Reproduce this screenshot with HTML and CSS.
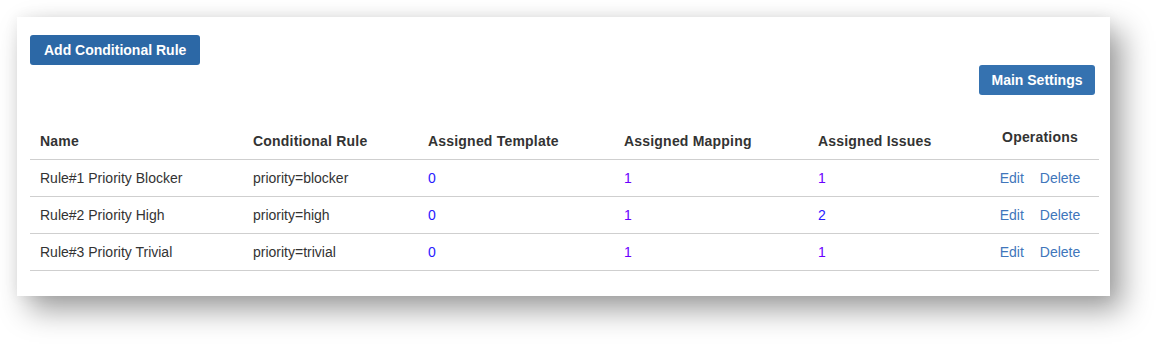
FILE: index.html
```html
<!DOCTYPE html>
<html lang="en">
<head>
    <meta charset="UTF-8">
    <title>Conditional Rules</title>
    <link rel="stylesheet" href="styles.css">
</head>
<body>
    <div class="panel">
        <div class="toolbar">
            <button class="btn btn-add">Add Conditional Rule</button>
            <div class="toolbar-right">
                <button class="btn btn-main">Main Settings</button>
            </div>
        </div>

        <table class="rules">
            <colgroup>
                <col class="col-name">
                <col class="col-rule">
                <col class="col-template">
                <col class="col-mapping">
                <col class="col-issues">
                <col class="col-ops">
            </colgroup>
            <thead>
                <tr>
                    <th>Name</th>
                    <th>Conditional Rule</th>
                    <th>Assigned Template</th>
                    <th>Assigned Mapping</th>
                    <th>Assigned Issues</th>
                    <th class="ops ops-head">Operations</th>
                </tr>
            </thead>
            <tbody>
                <tr>
                    <td>Rule#1 Priority Blocker</td>
                    <td>priority=blocker</td>
                    <td><a class="num">0</a></td>
                    <td><a class="num visited">1</a></td>
                    <td><a class="num visited">1</a></td>
                    <td class="ops"><a class="op">Edit</a><a class="op">Delete</a></td>
                </tr>
                <tr>
                    <td>Rule#2 Priority High</td>
                    <td>priority=high</td>
                    <td><a class="num">0</a></td>
                    <td><a class="num visited">1</a></td>
                    <td><a class="num">2</a></td>
                    <td class="ops"><a class="op">Edit</a><a class="op">Delete</a></td>
                </tr>
                <tr>
                    <td>Rule#3 Priority Trivial</td>
                    <td>priority=trivial</td>
                    <td><a class="num">0</a></td>
                    <td><a class="num visited">1</a></td>
                    <td><a class="num visited">1</a></td>
                    <td class="ops"><a class="op">Edit</a><a class="op">Delete</a></td>
                </tr>
            </tbody>
        </table>
    </div>
</body>
</html>
```

FILE: styles.css
```css
* {
    margin: 0;
    padding: 0;
    box-sizing: border-box;
}

html,
body {
    min-height: 345px;
}

body {
    font-family: "Liberation Sans", Arial, sans-serif;
    font-size: 14px;
    color: #333;
    background: #fff;
    padding: 17px 0 0 17px;
}

.panel {
    width: 1093px;
    height: 279px;
    background: #fff;
    padding: 18px 11px 26px 13px;
    box-shadow: 12px 14px 28px rgba(0, 0, 0, 0.38), 0 0 14px rgba(0, 0, 0, 0.06);
}

.toolbar {
    display: flex;
    flex-direction: column;
    align-items: flex-start;
}

.toolbar-right {
    align-self: stretch;
    display: flex;
    justify-content: flex-end;
    padding-right: 4px;
}

.btn {
    border: none;
    border-radius: 3px;
    height: 30px;
    font-family: inherit;
    font-size: 14px;
    font-weight: bold;
    color: #fff;
    cursor: pointer;
}

.btn-add {
    background: #2c68a6;
    padding: 0 14px;
}

.btn-main {
    background: #3572b0;
    padding: 0 12.5px;
}

.rules {
    margin-top: 24px;
    width: 1069px;
    border-collapse: collapse;
    table-layout: fixed;
}

.col-name { width: 213px; }
.col-rule { width: 175px; }
.col-template { width: 196px; }
.col-mapping { width: 194px; }
.col-issues { width: 173px; }
.col-ops { width: 118px; }

.rules th,
.rules td {
    text-align: left;
    padding: 8px 10px;
    line-height: 20px;
    border-bottom: 1px solid #cfcfcf;
    white-space: nowrap;
}

.rules th {
    font-weight: bold;
    vertical-align: bottom;
    letter-spacing: 0.2px;
}

.rules th.ops-head {
    padding-bottom: 12px;
}

.rules .ops {
    text-align: center;
}

.num {
    color: #2a1aff;
    text-decoration: none;
}

.num.visited {
    color: #6a00ff;
}

.op {
    color: #4076bb;
    text-decoration: none;
}

.op + .op {
    margin-left: 16px;
}
```
